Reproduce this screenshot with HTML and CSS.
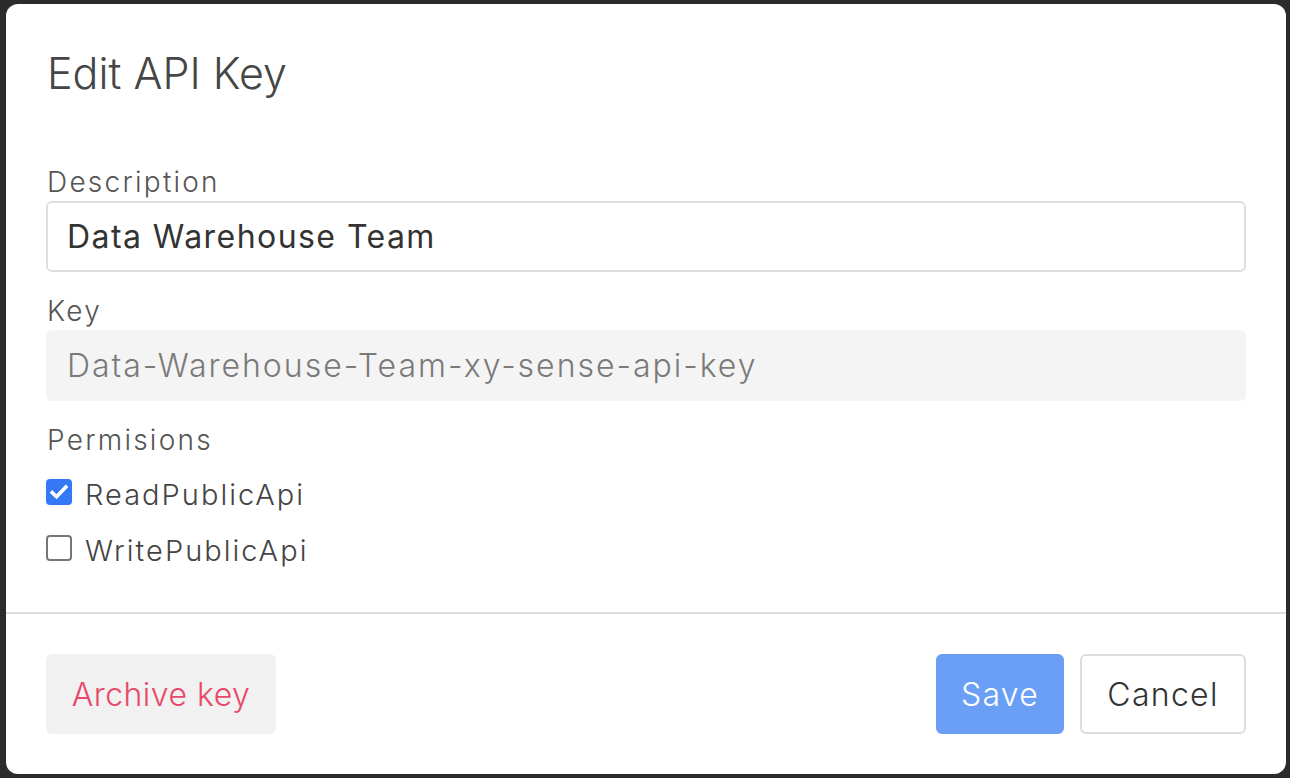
FILE: index.html
```html
<!DOCTYPE html>
<html lang="en">
<head>
<meta charset="utf-8">
<title>Edit API Key</title>
<link rel="stylesheet" href="styles.css">
</head>
<body>
<div class="modal">
  <div class="modal-header">
    <h1 class="title">Edit API Key</h1>
  </div>
  <div class="modal-body">
    <div class="field">
      <label class="label">Description</label>
      <div class="input">Data Warehouse Team</div>
    </div>
    <div class="field">
      <label class="label">Key</label>
      <div class="input input-disabled">Data-Warehouse-Team-xy-sense-api-key</div>
    </div>
    <div class="field">
      <label class="label perm-label">Permisions</label>
      <div class="checks">
        <div class="check-row">
          <span class="box box-checked">
            <svg width="26" height="26" viewBox="0 0 26 26"><path d="M6.2 13.6 L10.6 17.8 L19.8 8" fill="none" stroke="#fff" stroke-width="3.6" stroke-linecap="square" stroke-linejoin="miter"/></svg>
          </span>
          <span class="check-text">ReadPublicApi</span>
        </div>
        <div class="check-row">
          <span class="box"></span>
          <span class="check-text">WritePublicApi</span>
        </div>
      </div>
    </div>
  </div>
  <div class="divider"></div>
  <div class="modal-footer">
    <button class="btn btn-archive">Archive key</button>
    <div class="actions">
      <button class="btn btn-save">Save</button>
      <button class="btn btn-cancel">Cancel</button>
    </div>
  </div>
</div>
</body>
</html>
```
FILE: styles.css
```css
* { box-sizing: border-box; }
html, body { margin: 0; padding: 0; }
body {
  background: #2b2b2b;
  width: 1290px;
  height: 778px;
  overflow: hidden;
  font-family: "Inter", "Noto Sans", sans-serif;
}
.modal {
  margin: 4px 5px 0 6px;
  width: 1280px;
  height: 770px;
  background: #fff;
  border-radius: 12px;
  display: flex;
  flex-direction: column;
}
.modal-header {
  padding: 43px 40px 0 40px;
}
.title {
  margin: 0;
  font-size: 43px;
  line-height: 52px;
  font-weight: 300;
  letter-spacing: 0;
  color: #464646;
  padding-left: 1px;
}
.modal-body {
  padding: 66px 40px 0 40px;
  display: flex;
  flex-direction: column;
  gap: 22px;
}
.field {
  display: flex;
  flex-direction: column;
}
.label {
  font-size: 28px;
  line-height: 34px;
  font-weight: 300;
  letter-spacing: 0.08em;
  color: #555;
  margin-bottom: 2px;
  padding-left: 1px;
}
.input {
  height: 71px;
  border: 2px solid #dedede;
  border-radius: 6px;
  padding: 0 19px;
  display: flex;
  align-items: center;
  font-size: 32px;
  letter-spacing: 0.045em;
  font-weight: 400;
  color: #333;
  white-space: nowrap;
}
.input-disabled {
  border-color: #f4f4f4;
  background: #f4f4f4;
  color: #7a7a7a;
  font-weight: 300;
  letter-spacing: 0.062em;
}
.perm-label { margin-bottom: 15px; }
.checks {
  display: flex;
  flex-direction: column;
  gap: 16px;
}
.check-row {
  height: 40px;
  display: flex;
  align-items: center;
  gap: 13px;
}
.box {
  width: 26px;
  height: 26px;
  border: 2px solid #767676;
  border-radius: 4px;
  background: #fff;
  display: block;
  flex: none;
}
.box-checked {
  border: none;
  background: #3478f6;
}
.box svg { display: block; }
.check-text {
  font-size: 29px;
  font-weight: 300;
  letter-spacing: 0.07em;
  color: #444;
  padding-top: 4px;
}
.divider {
  margin-top: 44px;
  height: 2px;
  background: #dddddd;
}
.modal-footer {
  padding: 40px 40px 0 40px;
  display: flex;
  justify-content: space-between;
  align-items: center;
}
.actions {
  display: flex;
  gap: 16px;
}
.btn {
  height: 80px;
  border-radius: 6px;
  font-family: inherit;
  letter-spacing: 0.04em;
  font-size: 32px;
  font-weight: 300;
  border: none;
  padding: 0;
  cursor: pointer;
}
.btn-archive {
  width: 230px;
  background: #f1f1f1;
  color: #e8486a;
  letter-spacing: 0.015em;
}
.btn-save {
  width: 128px;
  background: #6b9ff6;
  color: #fff;
}
.btn-cancel {
  width: 166px;
  background: #fff;
  border: 2px solid #dddddd;
  color: #333;
}
```
